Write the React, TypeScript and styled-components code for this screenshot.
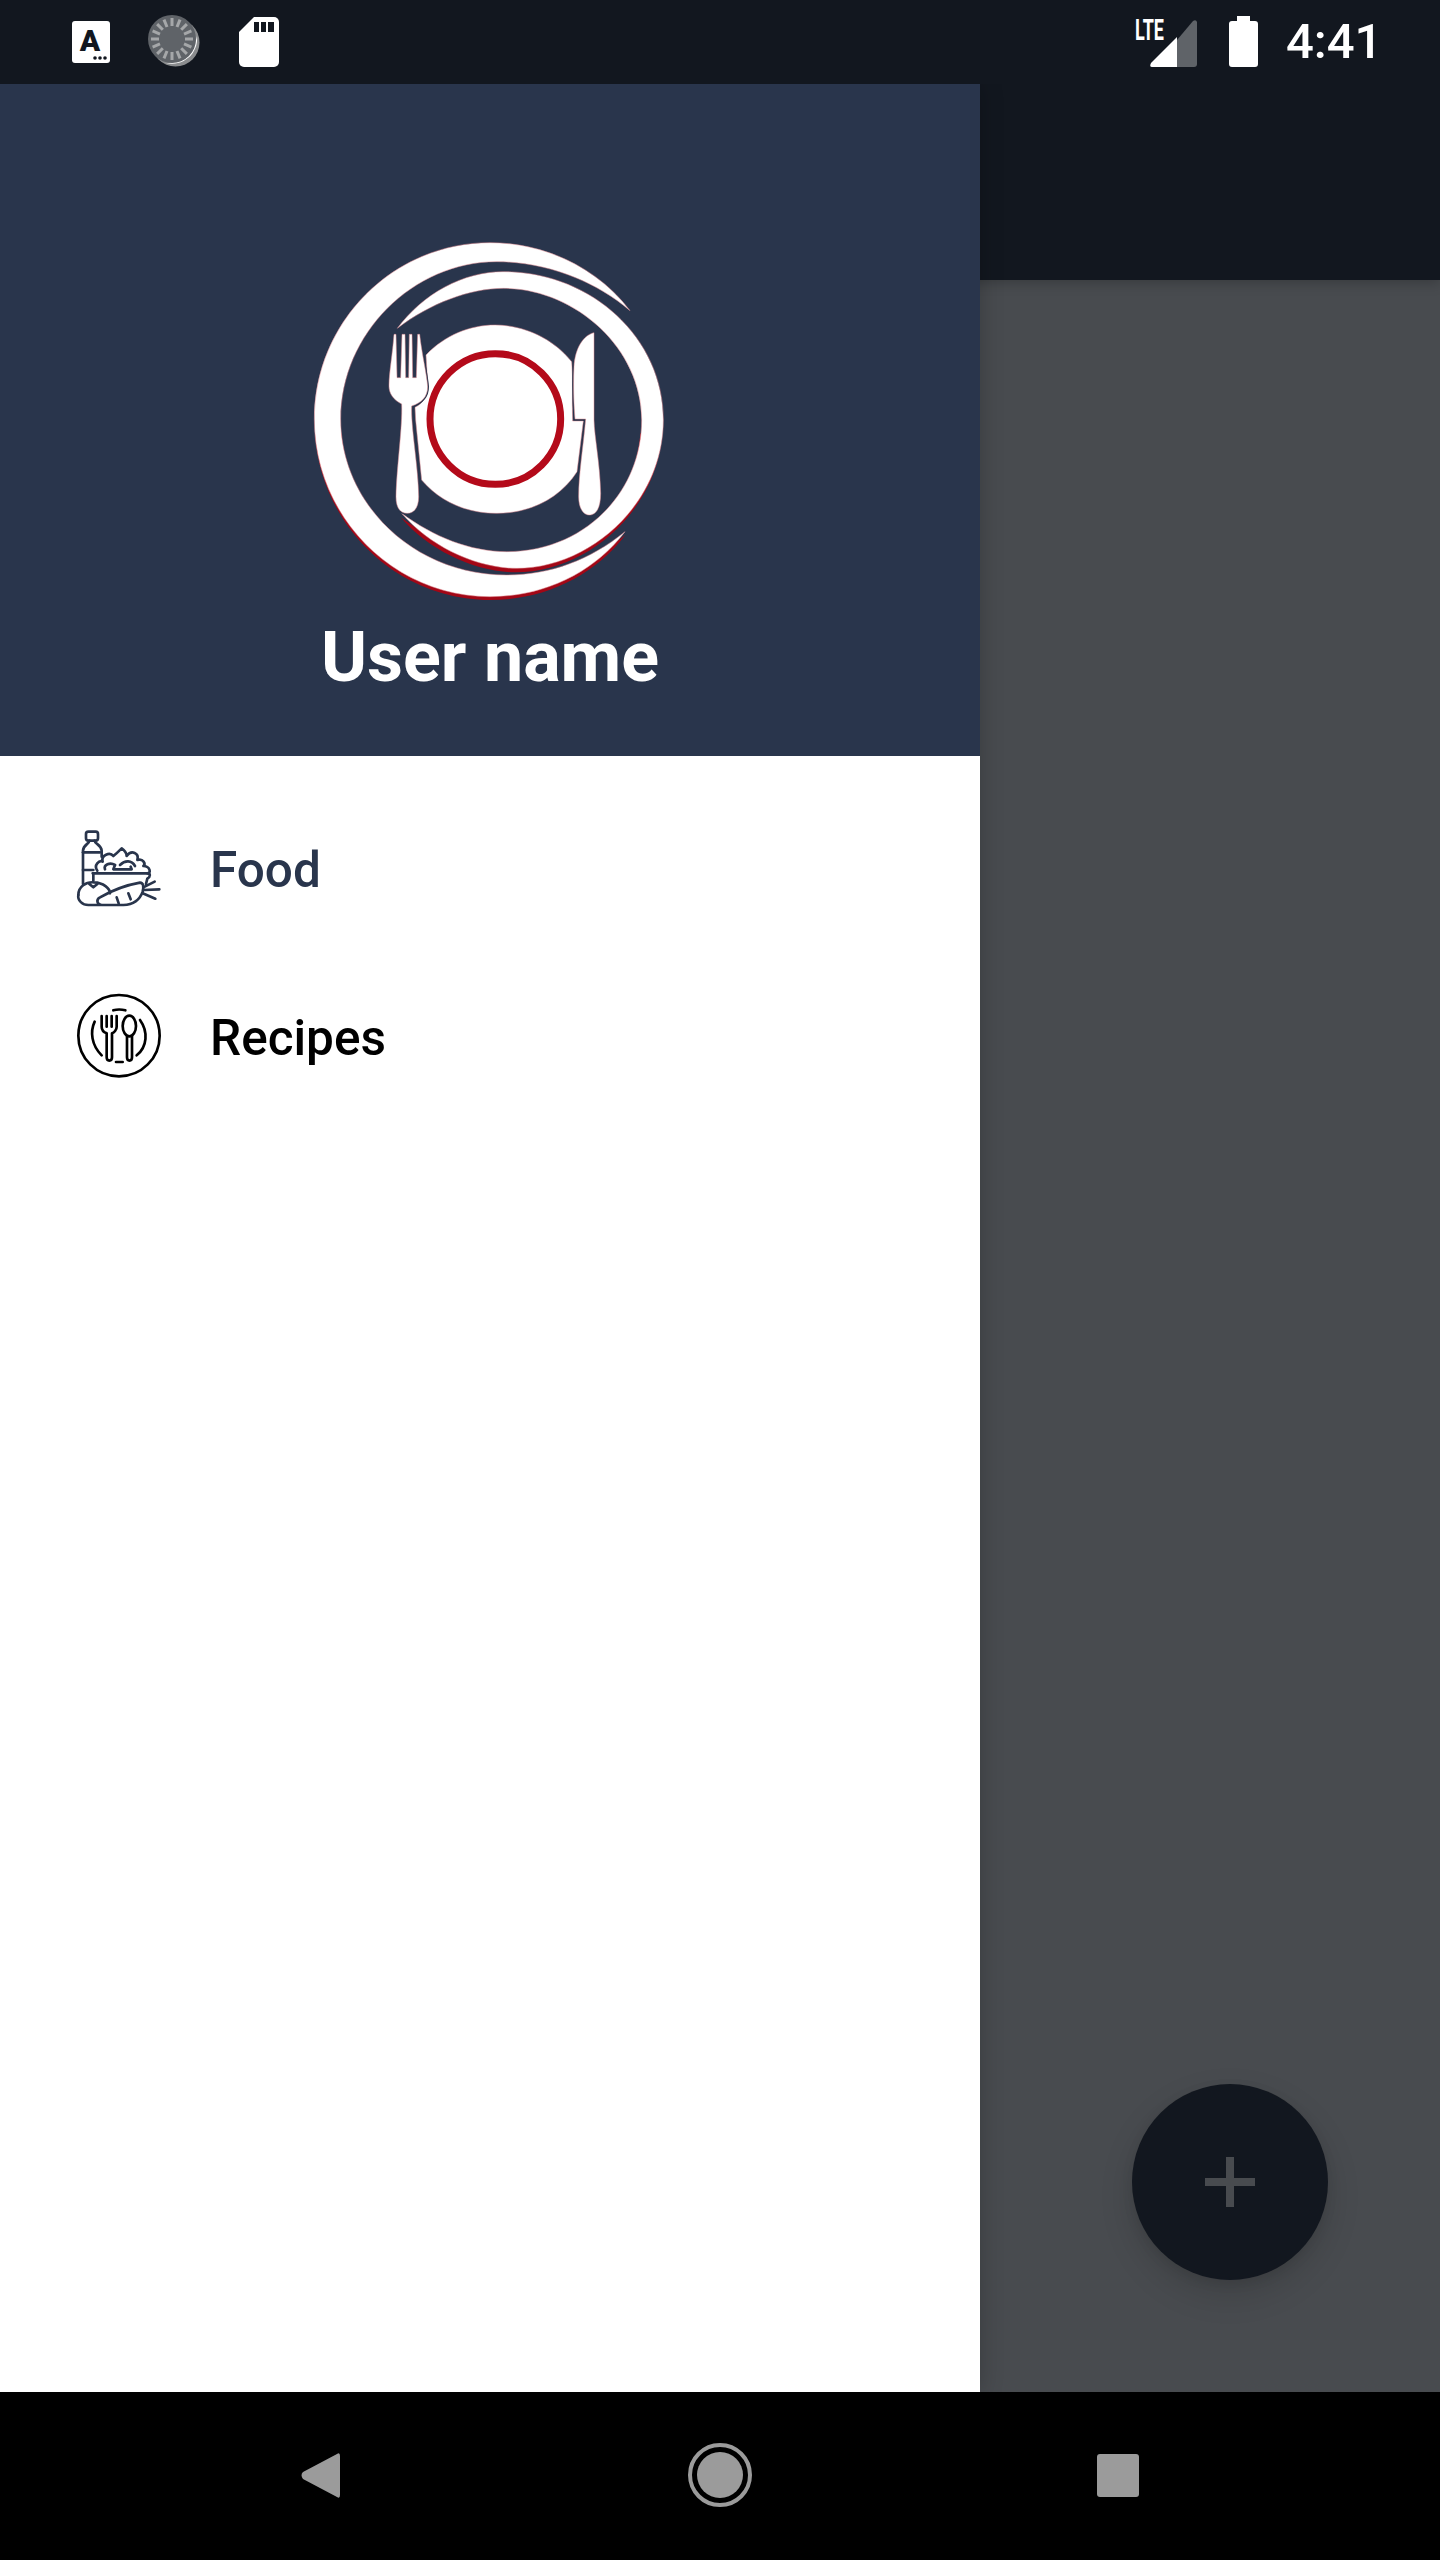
import React from "react";
import styled, { createGlobalStyle } from "styled-components";

const Global = createGlobalStyle`
  html, body { margin: 0; padding: 0; background: #000; }
  * { box-sizing: border-box; }
`;

const Screen = styled.div`
  width: 1440px;
  height: 2560px;
  display: flex;
  flex-direction: column;
  overflow: hidden;
  font-family: Roboto, "Liberation Sans", sans-serif;
`;

const StatusBar = styled.header`
  position: relative;
  z-index: 3;
  height: 84px;
  flex: none;
  background: #12171f;
  display: flex;
  align-items: center;
  justify-content: space-between;
  padding: 0 62px 0 0;
`;

const StatusIcons = styled.svg`
  display: block;
  flex: none;
`;

const StatusRight = styled.div`
  display: flex;
  align-items: center;
  gap: 26px;
`;

const Clock = styled.span`
  color: #fff;
  font-size: 49px;
  font-weight: 500;
  line-height: 84px;
  width: 92px;
  white-space: nowrap;
`;

const Main = styled.div`
  position: relative;
  flex: 1;
  display: flex;
  flex-direction: column;
  background: #484b4f;
`;

const AppBar = styled.div`
  height: 196px;
  flex: none;
  background: #12171f;
  box-shadow: 0 3px 12px rgba(0, 0, 0, 0.22);
`;

const Fab = styled.button`
  position: absolute;
  left: 1132px;
  top: 2000px;
  width: 196px;
  height: 196px;
  border: 0;
  padding: 0;
  border-radius: 50%;
  background: #12171f;
  display: flex;
  align-items: center;
  justify-content: center;
  box-shadow: 0 14px 34px rgba(0, 0, 0, 0.14), 0 4px 12px rgba(0, 0, 0, 0.08);
`;

const Drawer = styled.aside`
  position: absolute;
  left: 0;
  top: 0;
  bottom: 0;
  width: 980px;
  background: #fff;
  display: flex;
  flex-direction: column;
  box-shadow: 0 0 22px rgba(0, 0, 0, 0.22);
`;

const DrawerHeader = styled.div`
  height: 672px;
  flex: none;
  background: #29354c;
  display: flex;
  flex-direction: column;
  align-items: center;
  padding-top: 136px;
`;

const Logo = styled.svg`
  display: block;
  flex: none;
  width: 400px;
  height: 400px;
`;

const UserName = styled.div`
  color: #fff;
  font-size: 70px;
  font-weight: 700;
  line-height: 80px;
  margin-top: -3px;
  white-space: nowrap;
`;

const Menu = styled.nav`
  display: flex;
  flex-direction: column;
  padding-top: 30px;
`;

const MenuRow = styled.div`
  height: 168px;
  display: flex;
  align-items: center;
  padding-left: 60px;
  gap: 20px;
`;

const MenuIcon = styled.svg`
  display: block;
  flex: none;
  width: 130px;
  height: 120px;
`;

const MenuLabel = styled.span<{ $active?: boolean }>`
  font-size: 49.5px;
  font-weight: 500;
  line-height: 60px;
  color: ${(p) => (p.$active ? "#29354c" : "#000")};
`;

const NavBar = styled.footer`
  position: relative;
  z-index: 3;
  height: 168px;
  flex: none;
  background: #000;
`;

const NavIcons = styled.svg`
  display: block;
`;

const ticks = Array.from({ length: 16 }, (_, i) => (i * 360) / 16);

function LeftStatusIcons() {
  return (
    <StatusIcons width="300" height="84" viewBox="0 0 300 84">
      <rect x="72" y="21" width="38" height="42" rx="3" fill="#fff" />
      <text x="90" y="51" textAnchor="middle" fontFamily="Roboto, sans-serif" fontWeight="900" fontSize="30" fill="#12171f">
        A
      </text>
      <circle cx="95" cy="58" r="1.8" fill="#12171f" />
      <circle cx="100" cy="58" r="1.8" fill="#12171f" />
      <circle cx="105" cy="58" r="1.8" fill="#12171f" />

      <circle cx="175.5" cy="42.5" r="24" fill="#8a8c8e" />
      <path d="M197 36 A25 25 0 0 1 166 63 C182 63 194 53 197 36 Z" fill="#fff" />
      <circle cx="172" cy="39" r="24" fill="#5f6368" />
      {ticks.map((a) => (
        <rect key={a} x="170.5" y="18" width="3" height="8" fill="#a5a7a9" transform={`rotate(${a} 172 39)`} />
      ))}

      <path d="M254 17 H274 A5 5 0 0 1 279 22 V62 A5 5 0 0 1 274 67 H244 A5 5 0 0 1 239 62 V32 Z" fill="#fff" />
      <rect x="254" y="22" width="5" height="10" fill="#12171f" />
      <rect x="261" y="22" width="5" height="10" fill="#12171f" />
      <rect x="268" y="22" width="6" height="10" fill="#12171f" />
    </StatusIcons>
  );
}

function RightStatusIcons() {
  return (
    <StatusRight>
      <StatusIcons width="126" height="84" viewBox="1136 0 126 84">
        <text
          transform="translate(1137 40) scale(0.62 1)"
          fontFamily="Roboto, sans-serif"
          fontWeight="700"
          fontSize="29"
          fill="#fff"
        >
          LTE
        </text>
        <path d="M1179 40 V67 H1196 Q1199 67 1199 64 V22 Q1198 19 1195 21 Z" fill="#5f6368" />
        <path d="M1179 37 L1153 63 Q1151 67 1154 67 H1179 Z" fill="#fff" />
        <path d="M1239 16 H1252 V21 H1257 Q1260 21 1260 24 V64 Q1260 67 1257 67 H1234 Q1231 67 1231 64 V24 Q1231 21 1234 21 H1239 Z" fill="#fff" />
      </StatusIcons>
      <Clock>4:41</Clock>
    </StatusRight>
  );
}

const outer =
  "M1020 272 C920 140 760 68 600 68 C310 68 73 305 73 597 C73 890 310 1130 600 1130 C760 1130 910 1060 1005 935 C900 1020 780 1065 650 1065 C370 1065 152 850 152 597 C152 340 370 125 620 125 C770 125 920 185 1020 272 Z";
const inner =
  "M322 325 C400 220 520 155 640 155 C900 155 1120 350 1120 600 C1120 850 900 1045 680 1045 C560 1045 420 980 335 880 C430 950 540 995 650 995 C880 995 1055 820 1055 600 C1055 380 850 205 640 205 C540 205 420 250 322 325 Z";
const plate =
  "M408 405 C465 345 540 315 615 315 C700 315 790 355 845 425 C850 480 845 540 848 603 L880 603 L861 755 C810 835 720 880 620 880 C530 880 450 845 395 780 L377 600 L375 562 C400 550 415 525 413 490 Z";
const fork =
  "M312 343 L318 343 L321 473 L332 473 L336 343 L345 343 L347 473 L356 473 L358 343 L366 343 L368 473 L379 473 L383 343 L389 343 C395 400 410 460 413 500 C413 530 395 548 365 558 C362 620 385 740 386 830 C386 865 370 880 352 880 C332 880 318 865 318 830 C320 740 338 620 335 552 C310 540 296 520 297 495 C297 460 308 400 312 343 Z";
const knife =
  "M912 338 C880 345 855 385 852 440 C849 500 852 560 855 597 L887 597 C880 680 866 760 866 830 C866 865 880 885 898 885 C918 885 932 865 932 820 C930 730 913 650 912 600 Z";

function BrandLogo() {
  return (
    <Logo viewBox="0 0 1200 1200">
      <defs>
        <clipPath id="lower">
          <rect x="0" y="640" width="1200" height="560" />
        </clipPath>
      </defs>
      <g clipPath="url(#lower)" fill="#a30716">
        <path d={outer} transform="translate(1 10)" />
        <path d={inner} transform="translate(-3 12)" />
      </g>
      <g fill="#fff" stroke="#e08c92" strokeWidth="1.5">
        <path d={outer} />
        <path d={inner} />
        <path d={plate} />
      </g>
      <g fill="none" stroke="#29354c" strokeWidth="8">
        <path d={fork} />
        <path d={knife} />
      </g>
      <g fill="#fff" stroke="#e08c92" strokeWidth="1.5">
        <path d={fork} />
        <path d={knife} />
      </g>
      <circle cx="616" cy="597" r="196" fill="#fff" stroke="#b40a1a" strokeWidth="21" />
    </Logo>
  );
}

function FoodIcon() {
  return (
    <MenuIcon viewBox="0 0 390 360" fill="none" stroke="#29354c" strokeWidth="8" strokeLinecap="round" strokeLinejoin="round">
      <rect x="78" y="65" width="36" height="27" rx="7" />
      <path d="M88 92 C88 102 70 104 69 122 V222" />
      <path d="M104 92 C104 102 124 104 125 122 V140" />
      <path d="M69 127 H120" />
      <path d="M69 180 H100" />
      <path d="M98 190 H262 C272 190 272 200 262 206 L258 222" />
      <path d="M100 190 V212" />
      <path d="M112 182 C100 165 118 150 128 155 C122 135 150 125 160 138 C170 130 175 125 185 115 C195 122 200 130 200 138 C215 118 238 130 232 150 C250 145 258 162 250 168 C270 168 275 190 262 190" />
      <path d="M135 178 C130 165 150 155 165 165" />
      <path d="M165 165 L160 178 H215 L212 170" />
      <path d="M180 165 C195 150 215 150 225 168" />
      <path d="M55 255 C55 230 78 215 102 217 C130 218 150 235 150 250" />
      <path d="M55 255 C52 272 68 285 85 285 H120" />
      <path d="M88 222 L100 232 L112 222" />
      <path d="M120 262 C150 245 200 225 240 218 C250 218 252 230 248 245 C240 268 220 284 190 285 H125 C110 284 108 268 120 262 Z" />
      <path d="M170 262 L176 280" />
      <path d="M205 250 L212 268" />
      <path d="M250 232 L284 215" />
      <path d="M252 240 L298 238" />
      <path d="M248 250 L286 266" />
    </MenuIcon>
  );
}

function RecipesIcon() {
  return (
    <MenuIcon viewBox="0 -6 390 360" fill="none" stroke="#000" strokeWidth="8" strokeLinecap="round" strokeLinejoin="round">
      <circle cx="177" cy="167" r="122" />
      <path d="M160 91 C170 88 185 88 196 91" />
      <path d="M104 125 C90 155 94 195 125 226" />
      <path d="M240 120 C265 155 262 200 230 226" />
      <path d="M168 246 H188" />
      <path d="M125 108 V140 C125 152 135 158 140 160 V232 C140 245 156 245 156 232 V160 C162 158 170 150 170 140 V108" />
      <path d="M140 108 V140" />
      <path d="M155 108 V140" />
      <ellipse cx="208" cy="138" rx="20" ry="31" />
      <path d="M201 168 V232 C201 245 216 245 216 232 V168" />
    </MenuIcon>
  );
}

export default function App() {
  return (
    <Screen>
      <Global />
      <StatusBar>
        <LeftStatusIcons />
        <RightStatusIcons />
      </StatusBar>
      <Main>
        <AppBar />
        <Fab aria-label="add">
          <svg width="50" height="50" viewBox="0 0 50 50">
            <path d="M21 0 H29 V21 H50 V29 H29 V50 H21 V29 H0 V21 H21 Z" fill="#484b4f" />
          </svg>
        </Fab>
        <Drawer>
          <DrawerHeader>
            <BrandLogo />
            <UserName>User name</UserName>
          </DrawerHeader>
          <Menu>
            <MenuRow>
              <FoodIcon />
              <MenuLabel $active>Food</MenuLabel>
            </MenuRow>
            <MenuRow>
              <RecipesIcon />
              <MenuLabel>Recipes</MenuLabel>
            </MenuRow>
          </Menu>
        </Drawer>
      </Main>
      <NavBar>
        <NavIcons width="1440" height="168" viewBox="0 2392 1440 168">
          <path d="M337 2454 Q340 2452 340 2456 V2495 Q340 2499 337 2497 L303 2479 Q300 2475 303 2472 Z" fill="#9b9b9b" />
          <circle cx="720" cy="2475" r="30" fill="none" stroke="#9b9b9b" strokeWidth="4" />
          <circle cx="720" cy="2475" r="23" fill="#9b9b9b" />
          <rect x="1097" y="2454" width="42" height="43" rx="3" fill="#9b9b9b" />
        </NavIcons>
      </NavBar>
    </Screen>
  );
}
